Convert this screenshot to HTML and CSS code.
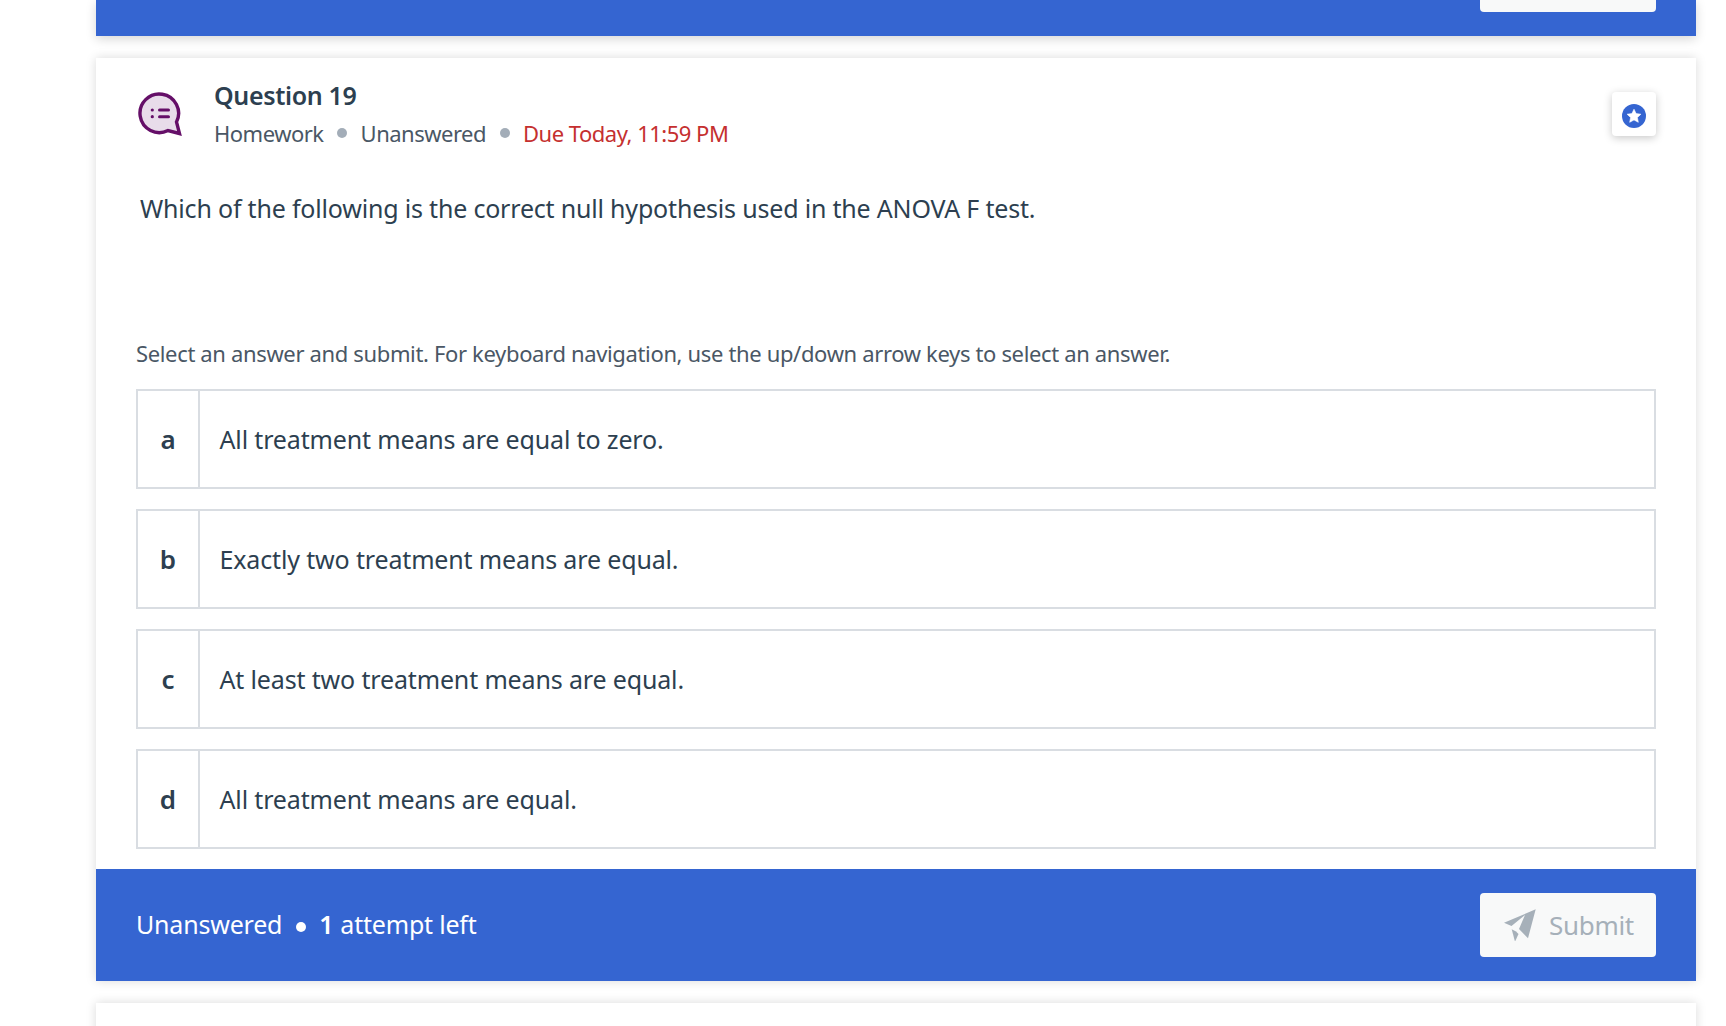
FILE: index.html
```html
<!DOCTYPE html>
<html lang="en">
<head>
<meta charset="utf-8">
<title>Question 19</title>
<link rel="stylesheet" href="styles.css">
</head>
<body>
<main class="page">
  <div class="card-end">
    <div class="submit-stub"></div>
  </div>
  <section class="card">
    <header class="q-head">
      <svg class="q-icon" viewBox="0 0 46 46" width="46" height="46" aria-hidden="true">
        <path d="M31 38.500A19.300 19.300 0 1 1 39.500 30L42.500 41.500z" fill="#e8dcea" stroke="#650f68" stroke-width="3.400" stroke-linejoin="miter"/>
        <circle cx="15.300" cy="18" r="1.600" fill="#650f68"/>
        <circle cx="15.300" cy="24.700" r="1.600" fill="#650f68"/>
        <rect x="21" y="16.500" width="12" height="3" rx="1.500" fill="#650f68"/>
        <rect x="21" y="23.200" width="12" height="3" rx="1.500" fill="#650f68"/>
      </svg>
      <div class="q-meta">
        <h2 class="q-title">Question 19</h2>
        <div class="q-sub">
          <span>Homework</span><i class="dot"></i><span>Unanswered</span><i class="dot"></i><span class="due">Due Today, 11:59 PM</span>
        </div>
      </div>
      <button class="star-btn" aria-label="Bookmark">
        <svg viewBox="0 0 24 24" width="24" height="24" aria-hidden="true">
          <circle cx="12" cy="12" r="12" fill="#3565d1"/>
          <path d="M12 5.200l2.100 4.400 4.800.6-3.500 3.300.9 4.800-4.300-2.400-4.300 2.400.9-4.800-3.500-3.300 4.800-.6z" fill="#fff" stroke="#fff" stroke-width=".6" stroke-linejoin="round"/>
        </svg>
      </button>
    </header>
    <p class="q-text">Which of the following is the correct null hypothesis used in the ANOVA F test.</p>
    <p class="q-hint">Select an answer and submit. For keyboard navigation, use the up/down arrow keys to select an answer.</p>
    <ul class="options">
      <li class="option"><span class="letter">a</span><span class="answer">All treatment means are equal to zero.</span></li>
      <li class="option"><span class="letter">b</span><span class="answer">Exactly two treatment means are equal.</span></li>
      <li class="option"><span class="letter">c</span><span class="answer">At least two treatment means are equal.</span></li>
      <li class="option"><span class="letter">d</span><span class="answer">All treatment means are equal.</span></li>
    </ul>
    <footer class="q-foot">
      <div class="status"><span>Unanswered</span><i class="foot-dot"></i><b>1</b><span class="attempt">attempt left</span></div>
      <button class="submit">
        <svg viewBox="0 0 32 32" width="32" height="32" aria-hidden="true">
          <path d="M31.700.300L0 13.700l7.500 3.300L21 6 15 20l9 9.300z" fill="#a6b0b9"/>
          <path d="M7.700 20.300L11 32.700l3.500-7.700-2.500-2.500z" fill="#a6b0b9"/>
        </svg>
        <span>Submit</span>
      </button>
    </footer>
  </section>
  <section class="card next"></section>
</main>
</body>
</html>
```
FILE: styles.css
```css
* { box-sizing: border-box; }
html, body { margin: 0; padding: 0; height: 100%; overflow: hidden; background: #fff; }
body { font-family: "Noto Sans", "Open Sans", sans-serif; color: #2d3f50; }
.page { height: 1026px; overflow: hidden; padding: 0 30px 0 96px; display: flex; flex-direction: column; gap: 22px; }
.card-end { flex: none; height: 36px; background: #3565d1; display: flex; justify-content: flex-end; padding-right: 40px; box-shadow: 0 3px 10px rgba(0,0,0,.16); }
.submit-stub { width: 176px; height: 12px; background: #f8f9f9; border-radius: 0 0 4px 4px; }
.card { flex: none; background: #fff; box-shadow: 0 0 10px rgba(0,0,0,.15); display: flex; flex-direction: column; }
.next { height: 60px; }
.q-head { display: flex; align-items: flex-start; padding: 19px 40px 0 41px; height: 105px; }
.q-icon { flex: none; margin: 15px 31px 0 0; }
.q-meta { flex: 1; }
.q-title { margin: 0; font-size: 25px; line-height: 36px; font-weight: 600; letter-spacing: -.36px; color: #2d3f50; }
.q-sub { display: flex; align-items: center; margin-top: 2px; font-size: 22px; line-height: 36px; letter-spacing: -.5px; color: #4a5765; }
.dot { width: 10px; height: 10px; border-radius: 50%; background: #a3adb8; margin: -1px 13.5px 0; }
.due { color: #c5302f; }
.star-btn { flex: none; width: 44px; height: 44px; margin-top: 15px; padding: 3px 0 0; border: 0; border-radius: 4px; background: #fff; display: flex; align-items: center; justify-content: center; box-shadow: 0 2px 8px rgba(0,0,0,.22); }
.q-text { margin: 0; padding: 25px 0 0 44px; font-size: 25px; line-height: 40px; letter-spacing: -.19px; color: #2d3f50; height: 172px; }
.q-hint { margin: 0 0 0 40px; font-size: 22px; line-height: 36px; letter-spacing: -.35px; color: #4a5765; height: 36px; }
.options { list-style: none; margin: 18px 40px 0; padding: 0; display: flex; flex-direction: column; gap: 20px; }
.option { display: flex; height: 100px; border: 2px solid #d9dde2; }
.letter { flex: none; width: 62px; border-right: 2px solid #d9dde2; display: flex; align-items: center; justify-content: center; font-size: 26px; font-weight: 600; color: #2d3f50; }
.answer { flex: 1; display: flex; align-items: center; padding: 0 0 1px 19.5px; font-size: 25px; letter-spacing: -.15px; color: #2d3f50; }
.q-foot { margin-top: 20px; height: 112px; background: #3565d1; display: flex; align-items: center; justify-content: space-between; padding: 0 40px; }
.status { display: flex; align-items: center; padding-bottom: 2px; font-size: 25px; letter-spacing: -.2px; color: #fff; }
.foot-dot { width: 10px; height: 10px; border-radius: 50%; background: #fff; margin: 5px 13px 0 14px; }
.status b { font-weight: 600; margin-right: 7px; }
.submit { width: 176px; height: 64px; padding: 0 0 0 24px; border: 0; border-radius: 4px; background: #f8f9f9; display: flex; align-items: center; gap: 13px; font-family: inherit; font-size: 26px; letter-spacing: -.3px; color: #a6b0b9; }
```
